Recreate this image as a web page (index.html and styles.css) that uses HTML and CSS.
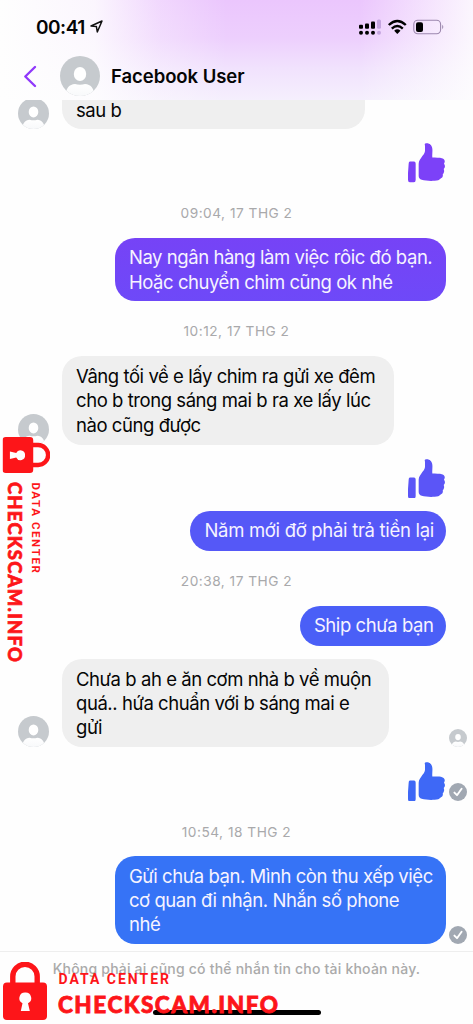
FILE: index.html
```html
<!DOCTYPE html>
<html lang="vi">
<head>
<meta charset="utf-8">
<title>Facebook User</title>
<link rel="stylesheet" href="styles.css">
</head>
<body>
<svg class="defs" width="0" height="0">
  <defs>
    <linearGradient id="body" x1="0" y1="0" x2="0" y2="1"><stop offset="0" stop-color="#fff"/><stop offset="1" stop-color="#f7f8fa"/></linearGradient>
    <clipPath id="disc"><circle cx="20" cy="20" r="20"/></clipPath>
  </defs>
  <symbol id="avatar" viewBox="0 0 40 40">
    <g clip-path="url(#disc)"><rect width="40" height="40" fill="#c6cace"/><ellipse cx="20" cy="18" rx="6.2" ry="7" fill="#fff"/><path d="M5 41C6 32 9 28.5 15 28C18 29 22 29 25 28C31 28.5 34 32 35 41Z" fill="url(#body)"/></g>
  </symbol>
  <symbol id="thumb" viewBox="0 0 111 118">
    <path d="M6 55H18Q23 55 23 61V111Q23 118 17 118H6Q0 118 0 111V90L2 62Q2 55 6 55Z"/>
    <path d="M52 1C62-2 72 5 73 17C74 27 72 35 73 43C82 44 94 42 104 46C109 48 111 52 110 57Q109 61 108 62C112 67 112 73 107 78C110 84 108 90 104 94C106 100 103 105 97 107C94 111 89 113 80 113C66 114 52 113 41 110C35 108 32 105 32 98V62C32 53 38 47 43 39C48 32 51 29 51 22V8Q49 2 52 1Z"/>
  </symbol>
  <symbol id="check" viewBox="0 0 18 18"><circle cx="9" cy="9" r="9" fill="#a1a8b2"/><path d="M5.4 9.6L8 12.2L12.6 5.8" fill="none" stroke="#fff" stroke-width="1.9" stroke-linecap="round" stroke-linejoin="round"/></symbol>
  <symbol id="lock" viewBox="0 0 44 58">
    <path d="M9.8 24V14.5A12.2 12.2 0 0 1 34.2 14.5V24" fill="none" stroke="#fd1519" stroke-width="5.4"/>
    <path fill-rule="evenodd" fill="#fd1519" d="M4 20.5H40Q44 20.5 44 24.5V54Q44 58 40 58H4Q0 58 0 54V24.5Q0 20.5 4 20.5ZM22 30.5A5.7 5.7 0 0 0 19.5 41.3L17.8 49H26.8L25 41.3A5.7 5.7 0 0 0 22 30.5Z"/>
  </symbol>
</svg>
<div class="screen">
  <header class="header">
    <div class="status">
      <span class="clock">00:41</span>
      <svg class="location" width="13" height="13" viewBox="0 0 13 13"><path d="M1 6L12 1L7.3 12L6.4 6.6Z" fill="none" stroke="#111" stroke-width="1.5" stroke-linejoin="round"/></svg>
      <svg class="system" width="86" height="17" viewBox="0 0 86 17">
        <rect x="0" y="5.7" width="4" height="4" rx="1"/><rect x="6" y="4.5" width="4" height="5.2" rx="1"/><rect x="12" y="2.5" width="4" height="7.2" rx="1"/><rect x="18" y=".5" width="4" height="9.2" rx="1.5" fill="#c4a5df"/>
        <circle cx="2" cy="13.7" r="2"/><circle cx="8" cy="13.7" r="2"/><circle cx="14" cy="13.7" r="2"/><circle cx="20" cy="13.7" r="2" fill="#c4a5df"/>
        <path d="M29.8 6Q38.3-2 46.8 6M32.8 9.6Q38.3 4.6 43.8 9.6" fill="none" stroke="#000" stroke-width="2.4"/><path d="M35.2 11.7Q38.3 9 41.5 11.7L38.3 15Z"/>
        <rect x="54.8" y="1.3" width="26.8" height="13.5" rx="4" fill="none" stroke="#9c87ae" stroke-width="1.1"/><rect x="57" y="3.3" width="7" height="9.6" rx="2"/><path d="M83.2 5.8Q85.4 8 83.2 10.2Z" fill="#9c87ae"/>
      </svg>
    </div>
    <div class="title">
      <svg class="back" width="14" height="23" viewBox="0 0 14 23"><path d="M12 2L2.3 11.5L12 21" fill="none" stroke="#9039fb" stroke-width="2.4" stroke-linecap="round" stroke-linejoin="round"/></svg>
      <svg class="avatar-lg"><use href="#avatar"/></svg>
      <h1>Facebook User</h1>
    </div>
  </header>
  <main class="chat">
    <div class="row in first"><svg class="avatar"><use href="#avatar"/></svg><div class="bubble w303"><p>sau b</p></div></div>
    <div class="row out like"><svg class="thumb c1"><use href="#thumb"/></svg></div>
    <time>09:04, 17 THG 2</time>
    <div class="row out"><div class="bubble b1 w331"><p>Nay ngân hàng làm việc rôic đó bạn.</p><p>Hoặc chuyển chim cũng ok nhé</p></div></div>
    <time>10:12, 17 THG 2</time>
    <div class="row in"><svg class="avatar"><use href="#avatar"/></svg><div class="bubble w331"><p>Vâng tối về e lấy chim ra gửi xe đêm</p><p>cho b trong sáng mai b ra xe lấy lúc</p><p>nào cũng được</p></div></div>
    <div class="row out like"><svg class="thumb c2"><use href="#thumb"/></svg></div>
    <div class="row out"><div class="bubble b2 w256"><p>Năm mới đỡ phải trả tiền lại</p></div></div>
    <time>20:38, 17 THG 2</time>
    <div class="row out"><div class="bubble b3 w146"><p>Ship chưa bạn</p></div></div>
    <div class="row in next"><svg class="avatar"><use href="#avatar"/></svg><div class="bubble w326"><p>Chưa b ah e ăn cơm nhà b về muộn</p><p>quá.. hứa chuẩn với b sáng mai e</p><p>gửi</p></div><svg class="receipt"><use href="#avatar"/></svg></div>
    <div class="row out like"><svg class="thumb c3"><use href="#thumb"/></svg><svg class="receipt low"><use href="#check"/></svg></div>
    <time>10:54, 18 THG 2</time>
    <div class="row out"><div class="bubble b4 w331"><p>Gửi chưa bạn. Mình còn thu xếp việc</p><p>cơ quan đi nhận. Nhắn số phone</p><p>nhé</p></div><svg class="receipt"><use href="#check"/></svg></div>
  </main>
  <footer class="footer"><p>Không phải ai cũng có thể nhắn tin cho tài khoản này.</p><div class="home"></div></footer>
  <svg class="stamp bottom" viewBox="0 0 276 58">
    <use href="#lock" width="44" height="58"/>
    <text class="stamp-small" x="55.5" y="22.3" textLength="110.5">DATA CENTER</text>
    <text class="stamp-big" x="55" y="51.2" textLength="220">CHECKSCAM.INFO</text>
  </svg>
  <svg class="stamp side" viewBox="0 0 276 58">
    <use href="#lock" width="44" height="58"/>
    <text class="stamp-small" x="55.5" y="22.3" textLength="110.5">DATA CENTER</text>
    <text class="stamp-big" x="55" y="51.2" textLength="220">CHECKSCAM.INFO</text>
  </svg>
</div>
</body>
</html>
```
FILE: styles.css
```css
* { box-sizing: border-box; margin: 0; padding: 0; }
body { background: #fefefe; font-family: Inter, "Noto Sans", sans-serif; color: #050505; }
svg { display: block; flex: none; }
.defs { position: absolute; }
.screen { position: relative; width: 473px; height: 1024px; overflow: hidden; display: flex; flex-direction: column; }
.header {
  height: 100px; flex: none;
  background:
    linear-gradient(90deg, #fefefe 0%, rgba(254,254,254,.85) 20%, rgba(254,254,254,.3) 34%, rgba(254,254,254,0) 48%, rgba(254,254,254,0) 76%, rgba(254,254,254,.85) 100%),
    linear-gradient(180deg, #ebc6fd 0%, #edcffd 38%, #f1e2fd 68%, #f5effd 100%);
}
.status { height: 53px; padding: 18px 28px 0 36px; display: flex; align-items: flex-start; }
.clock { font-size: 19px; line-height: 19px; font-weight: 600; letter-spacing: -.5px; width: 54px; }
.location { margin-top: 2px; }
.system { margin-left: auto; margin-top: 1px; }
.title { display: flex; align-items: center; height: 46px; padding-left: 23px; }
.avatar-lg { width: 40px; height: 40px; margin-left: 23px; }
h1 { font-size: 18.5px; font-weight: 600; letter-spacing: -.05px; margin-left: 11px; white-space: nowrap; }
.chat { flex: none; height: 851px; display: flex; flex-direction: column; overflow: hidden; }
.row { position: relative; display: flex; align-items: flex-end; flex: none; padding: 0 26.6px 0 18px; }
.out { justify-content: flex-end; }
.first { margin-top: -35px; }
.first .bubble { padding-top: 33px; height: 64px; }
.next { margin-top: 13.3px; }
.avatar { width: 31px; height: 31px; margin-right: 13px; }
.bubble { background: #efefef; border-radius: 20px; padding: 7.6px 14px; min-height: 40px; }
.bubble p { font-size: 18.5px; line-height: 24.3px; letter-spacing: -.44px; white-space: nowrap; }
.out .bubble { color: #f6f3ff; }
.w303 { width: 303px; }
.w331 { width: 331.5px; }
.w256 { width: 256px; }
.bubble.w256 p { letter-spacing: -.3px; }
.w146 { width: 146.5px; }
.w326 { width: 326.5px; }
.b1 { background: linear-gradient(#7643f6, #6e49f8); }
.b2 { background: #5558f7; }
.b3 { background: #4a5ff7; }
.b4 { background: #3673f6; }
.like { padding: 14.3px 28.3px 12.5px 0; }
.thumb { width: 37px; height: 39.5px; }
.c1 { fill: #7c41f8; }
.c2 { fill: #5b55f7; }
.c3 { fill: #3e68f6; }
time { height: 55px; line-height: 61px; flex: none; text-align: center; font-size: 13.7px; letter-spacing: .5px; color: #a9a9ab; }
.like + time { height: 42.4px; line-height: 36px; }
.receipt { position: absolute; right: 6.5px; bottom: 0; width: 18px; height: 18px; }
.low { bottom: 13px; }
.footer { border-top: 1px solid #eee; height: 73px; padding-top: 7px; display: flex; flex-direction: column; align-items: center; justify-content: space-between; }
.footer p { font-size: 14px; line-height: 20px; letter-spacing: .21px; color: #aaa; white-space: nowrap; font-weight: 500; }
.home { width: 168px; height: 5.5px; border-radius: 3px; background: #000; margin-bottom: 9px; }
.stamp { position: absolute; width: 276px; height: 58px; transform-origin: 0 0; }
.bottom { left: 3px; top: 962px; }
.side { left: 49.5px; top: 437px; transform: rotate(90deg) scale(.818); }
.stamp-small { font: 700 14px Roboto, sans-serif; fill: #fd1519; }
.stamp-big { font: 900 22.5px Lato, sans-serif; fill: #fd1519; stroke: #fd1519; stroke-width: .8px; }
```
